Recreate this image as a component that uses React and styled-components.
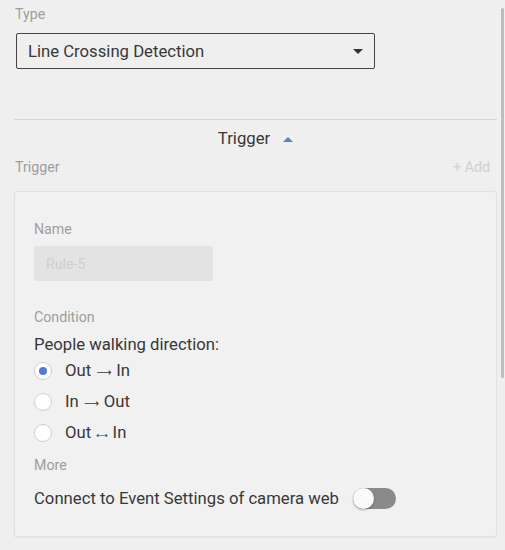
import React, { useState } from 'react';
import styled, { createGlobalStyle } from 'styled-components';

const GlobalStyle = createGlobalStyle`
  html, body {
    margin: 0;
    padding: 0;
    background: #efefef;
  }
  body {
    font-family: Roboto, "Liberation Sans", Arial, sans-serif;
    color: #333;
  }
`

const Page = styled.div`
  position: relative;
  width: 505px;
  height: 550px;
  overflow: hidden;
  box-sizing: border-box;
  padding: 5px 8px 0 14px;
`

const ScrollThumb = styled.div`
  position: absolute;
  top: 8px;
  right: 1px;
  width: 3px;
  height: 370px;
  background: #bdbdbd;
  border-radius: 2px;
`

const FieldLabel = styled.div`
  font-size: 14.2px;
  line-height: 18px;
  color: #9e9e9e;
  padding-left: ${({inset}) => inset || '1px'};
`

const Select = styled.div`
  margin: 10px 0 0 2px;
  width: 359px;
  height: 36px;
  box-sizing: border-box;
  border: 1px solid #444;
  border-radius: 2px;
  display: flex;
  align-items: center;
  justify-content: space-between;
  padding: 1px 11px 0 11px;
  font-size: 16.7px;
  color: #383838;
`

const Caret = styled.span`
  width: 0;
  height: 0;
  border-left: 5px solid transparent;
  border-right: 5px solid transparent;
  border-top: 5px solid #333;
`

const Divider = styled.div`
  margin-top: 50px;
  height: 1px;
  background: #d6d6d6;
`

const SectionHead = styled.div`
  display: flex;
  justify-content: center;
  align-items: center;
  gap: 13px;
  height: 36px;
  font-size: 16.7px;
  color: #383838;
`

const UpCaret = styled.span`
  width: 0;
  height: 0;
  border-left: 5px solid transparent;
  border-right: 5px solid transparent;
  border-bottom: 5px solid #5b82c9;
  margin-top: 2px;
`

const RowBetween = styled.div`
  display: flex;
  justify-content: space-between;
  align-items: center;
  height: 22px;
`

const AddLink = styled.span`
  font-size: 14.2px;
  color: #d0d0d0;
  margin-right: 7px;
`

const Card = styled.div`
  margin-top: 13px;
  height: 346px;
  box-sizing: border-box;
  border: 1px solid #e2e2e2;
  border-radius: 3px;
  background: #f1f1f1;
  box-shadow: 0 1px 2px rgba(0,0,0,0.04);
  padding: 28px 19px 0 19px;
  display: flex;
  flex-direction: column;
`

const NameInput = styled.div`
  margin-top: 8px;
  width: 179px;
  height: 35px;
  background: #e3e3e3;
  border-radius: 2px;
  display: flex;
  align-items: center;
  padding-left: 12px;
  box-sizing: border-box;
  font-size: 14.2px;
  color: #cfcfcf;
`

const Question = styled.div`
  margin-top: 9px;
  font-size: 16.7px;
  color: #383838;
  line-height: 20px;
`

const RadioRow = styled.label`
  display: flex;
  align-items: center;
  gap: 13px;
  height: 31px;
  font-size: 16.7px;
  color: #383838;
  cursor: pointer;
`

const RadioCircle = styled.span`
  width: 18px;
  height: 18px;
  box-sizing: border-box;
  border-radius: 50%;
  border: 1px solid #cfcfcf;
  background: #fff;
  display: flex;
  align-items: center;
  justify-content: center;
  &::after {
    content: '';
    width: 8px;
    height: 8px;
    border-radius: 50%;
    background: ${({checked}) => (checked ? '#4f7bd0' : 'transparent')};
  }
`

const Arrow = styled.span`
  font-family: "DejaVu Sans", sans-serif;
  font-size: ${({size}) => size || '10.5px'};
  margin: 0 5px;
`

const ToggleRow = styled.div`
  margin-top: 14px;
  display: flex;
  align-items: center;
  gap: 14px;
  font-size: 16.7px;
  color: #383838;
`

const Track = styled.span`
  position: relative;
  width: 43px;
  height: 21px;
  border-radius: 11px;
  background: #8a8a8a;
`

const Knob = styled.span`
  position: absolute;
  left: 0;
  top: 0;
  width: 21px;
  height: 21px;
  border-radius: 50%;
  background: #fafafa;
  box-shadow: 0 1px 2px rgba(0,0,0,0.35);
`

const options = [
  { id: 'oi', a: 'Out', arrow: '\u27F6', b: 'In' },
  { id: 'io', a: 'In', arrow: '\u27F6', b: 'Out' },
  { id: 'both', a: 'Out', arrow: '\u27F7', b: 'In', size: '8px' },
];

function App() {
  const [dir, setDir] = useState('oi');

  return (
    <>
      <GlobalStyle />
      <Page>
        <ScrollThumb />
        <FieldLabel>Type</FieldLabel>
        <Select>
          <span>Line Crossing Detection</span>
          <Caret />
        </Select>
        <Divider />
        <SectionHead>
          <span>Trigger</span>
          <UpCaret />
        </SectionHead>
        <RowBetween>
          <FieldLabel>Trigger</FieldLabel>
          <AddLink>+ Add</AddLink>
        </RowBetween>
        <Card>
          <FieldLabel inset="0">Name</FieldLabel>
          <NameInput>Rule-5</NameInput>
          <FieldLabel inset="0" style={{marginTop: 27}}>Condition</FieldLabel>
          <Question>People walking direction:</Question>
          {options.map(o => (
            <RadioRow key={o.id} onClick={() => setDir(o.id)}>
              <RadioCircle checked={dir === o.id} />
              <span>{o.a}<Arrow size={o.size}>{o.arrow}</Arrow>{o.b}</span>
            </RadioRow>
          ))}
          <FieldLabel inset="0" style={{marginTop: 8}}>More</FieldLabel>
          <ToggleRow>
            <span>Connect to Event Settings of camera web</span>
            <Track><Knob /></Track>
          </ToggleRow>
        </Card>
      </Page>
    </>
  );
}

export default App;
